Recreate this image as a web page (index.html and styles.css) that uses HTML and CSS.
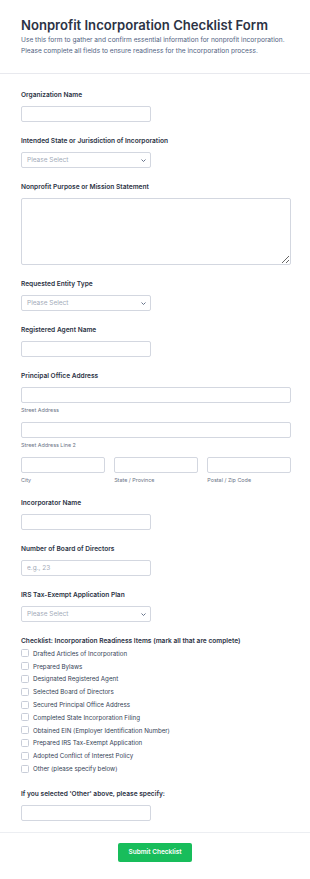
FILE: index.html
```html
<!DOCTYPE html>
<html lang="en">
<head>
    <meta charset="UTF-8">
    <meta name="viewport" content="width=device-width, initial-scale=1.0">
    <title>Nonprofit Incorporation Checklist Form</title>
    <link rel="stylesheet" href="styles.css">
</head>
<body>
    <div class="container">
        <div class="header">
            <h1>Nonprofit Incorporation Checklist Form</h1>
            <p>Use this form to gather and confirm essential information for nonprofit incorporation. Please complete all fields to ensure readiness for the incorporation process.</p>
        </div>
        <form class="form">
            <div class="form-control">
                <label>Organization Name</label>
                <input type="text" class="short">
            </div>
            <div class="form-control">
                <label>Intended State or Jurisdiction of Incorporation</label>
                <div class="select-wrap">
                    <select><option>Please Select</option></select>
                    <svg class="chevron" width="5" height="3" viewBox="0 0 5 3"><path d="M0.5 0.5 L2.5 2.5 L4.5 0.5" fill="none" stroke="#57647e" stroke-width="0.9"/></svg>
                </div>
            </div>
            <div class="form-control">
                <label>Nonprofit Purpose or Mission Statement</label>
                <textarea></textarea>
            </div>
            <div class="form-control">
                <label>Requested Entity Type</label>
                <div class="select-wrap">
                    <select><option>Please Select</option></select>
                    <svg class="chevron" width="5" height="3" viewBox="0 0 5 3"><path d="M0.5 0.5 L2.5 2.5 L4.5 0.5" fill="none" stroke="#57647e" stroke-width="0.9"/></svg>
                </div>
            </div>
            <div class="form-control">
                <label>Registered Agent Name</label>
                <input type="text" class="short">
            </div>
            <div class="form-control">
                <label>Principal Office Address</label>
                <div class="sub">
                    <input type="text">
                    <small>Street Address</small>
                </div>
                <div class="sub">
                    <input type="text">
                    <small>Street Address Line 2</small>
                </div>
                <div class="row">
                    <div class="sub">
                        <input type="text">
                        <small>City</small>
                    </div>
                    <div class="sub">
                        <input type="text">
                        <small>State / Province</small>
                    </div>
                    <div class="sub">
                        <input type="text">
                        <small>Postal / Zip Code</small>
                    </div>
                </div>
            </div>
            <div class="form-control">
                <label>Incorporator Name</label>
                <input type="text" class="short">
            </div>
            <div class="form-control">
                <label>Number of Board of Directors</label>
                <input type="text" class="short" placeholder="e.g., 23">
            </div>
            <div class="form-control">
                <label>IRS Tax-Exempt Application Plan</label>
                <div class="select-wrap">
                    <select><option>Please Select</option></select>
                    <svg class="chevron" width="5" height="3" viewBox="0 0 5 3"><path d="M0.5 0.5 L2.5 2.5 L4.5 0.5" fill="none" stroke="#57647e" stroke-width="0.9"/></svg>
                </div>
            </div>
            <div class="form-control">
                <label>Checklist: Incorporation Readiness Items (mark all that are complete)</label>
                <div class="checks">
                    <div class="check"><span class="box"></span>Drafted Articles of Incorporation</div>
                    <div class="check"><span class="box"></span>Prepared Bylaws</div>
                    <div class="check"><span class="box"></span>Designated Registered Agent</div>
                    <div class="check"><span class="box"></span>Selected Board of Directors</div>
                    <div class="check"><span class="box"></span>Secured Principal Office Address</div>
                    <div class="check"><span class="box"></span>Completed State Incorporation Filing</div>
                    <div class="check"><span class="box"></span>Obtained EIN (Employer Identification Number)</div>
                    <div class="check"><span class="box"></span>Prepared IRS Tax-Exempt Application</div>
                    <div class="check"><span class="box"></span>Adopted Conflict of Interest Policy</div>
                    <div class="check"><span class="box"></span>Other (please specify below)</div>
                </div>
            </div>
            <div class="form-control last">
                <label>If you selected 'Other' above, please specify:</label>
                <input type="text" class="short">
            </div>
        </form>
        <div class="button">
            <button type="submit">Submit Checklist</button>
        </div>
    </div>
</body>
</html>
```

FILE: styles.css
```css
*{
    box-sizing: border-box;
}
body{
    background-color: #fff;
    font-family: Inter, "Liberation Sans", sans-serif;
    margin: 0;
    color: #2c3345;
}
.container{
    width: 310px;
}
.header{
    padding: 17px 21px 16px;
    border-bottom: 1px solid #e8e9ee;
}
.header h1{
    margin: 0 0 1px;
    font-size: 13.1px;
    line-height: 17px;
    font-weight: 600;
    color: #2c3345;
}
.header p{
    margin: 0;
    font-size: 6.6px;
    line-height: 11px;
    color: #51627f;
}
.form{
    padding: 17px 19px 11px 21px;
    border-bottom: 1px solid #eceef2;
}
.form-control{
    margin-bottom: 15px;
}
.form-control.last{
    margin-bottom: 0;
}
.form-control label{
    display: block;
    font-size: 6.6px;
    line-height: 9px;
    font-weight: 600;
    margin-bottom: 6px;
    color: #2c3345;
}
.form-control input,
.form-control select,
.form-control textarea{
    display: block;
    width: 100%;
    height: 16px;
    border: 1px solid #d3d7e0;
    border-radius: 2px;
    background: #fff;
    font-family: inherit;
    font-size: 6.5px;
    padding: 0 5px;
    color: #2c3345;
    outline: none;
}
.form-control input.short{
    width: 130px;
}
.form-control input::placeholder{
    color: #a3aab8;
}
.form-control textarea{
    height: 67px;
    resize: vertical;
}
.select-wrap{
    position: relative;
    width: 130px;
}
.form-control select{
    appearance: none;
    color: #a3aab8;
}
.chevron{
    position: absolute;
    right: 5px;
    top: 7px;
}
.sub{
    margin-bottom: 8px;
}
.sub small{
    display: block;
    font-size: 5.4px;
    line-height: 7px;
    margin-top: 4px;
    color: #6b7486;
}
.row{
    display: grid;
    grid-template-columns: 1fr 1fr 1fr;
    column-gap: 9.5px;
}
.row .sub{
    margin-bottom: 0;
}
.checks{
    display: flex;
    flex-direction: column;
    margin-top: -5px;
}
.check{
    display: flex;
    align-items: center;
    height: 12.8px;
    font-size: 6.2px;
    color: #343e55;
}
.box{
    width: 8px;
    height: 8px;
    border: 1px solid #c8cdd8;
    border-radius: 1.5px;
    margin-right: 4px;
    background: #fff;
}
.button{
    display: flex;
    justify-content: center;
    padding: 10px 0 17px;
}
.button button{
    width: 74px;
    height: 19px;
    background-color: #18bd5b;
    color: #fff;
    border: none;
    border-radius: 2px;
    font-family: inherit;
    font-size: 6.5px;
    font-weight: 600;
    cursor: pointer;
}
```
